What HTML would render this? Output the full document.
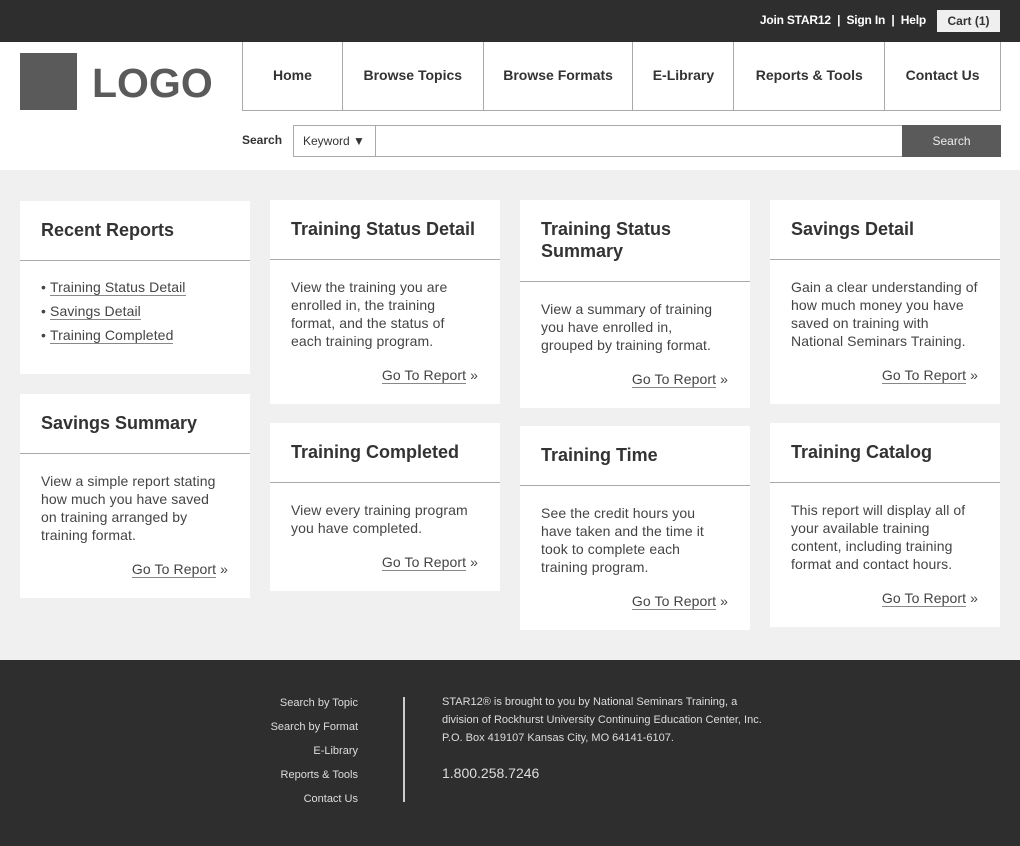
<!DOCTYPE html>
<html><head><meta charset="utf-8"><style>
*{margin:0;padding:0;box-sizing:border-box}
body{width:1020px;height:846px;position:relative;background:#f0f0f0;font-family:"Liberation Sans",Arial,sans-serif;overflow:hidden}
.top{position:absolute;left:0;top:0;width:1020px;height:42px;background:#2e2e2e}
.tl{position:absolute;top:13px;right:94px;color:#fff;font-size:12px;font-weight:bold;letter-spacing:-0.2px}
.cart{position:absolute;left:937px;top:10px;width:63px;height:22px;background:#efefef;color:#333;font-size:12px;font-weight:bold;text-align:center;line-height:22px}
.hdr{position:absolute;left:0;top:42px;width:1020px;height:128px;background:#fff}
.sq{position:absolute;left:20px;top:11px;width:57px;height:57px;background:#5a5a5a}
.logo{position:absolute;left:92px;top:17px;font-size:41px;font-weight:bold;color:#5a5a5a;line-height:48px}
.nav{position:absolute;left:242px;top:0;width:759px;height:69px;border:1px solid #aaa;border-top:none;display:flex}
.nav div{height:68px;line-height:66px;text-align:center;font-size:14px;font-weight:bold;color:#333;border-left:1px solid #aaa}
.nav div:first-child{border-left:none}
.sl{position:absolute;left:242px;top:91px;font-size:12px;font-weight:bold;color:#333}
.inp{position:absolute;left:293px;top:83px;width:708px;height:32px;border:1px solid #aaa;background:#fff}
.kw{position:absolute;left:0;top:0;width:82px;height:30px;border-right:1px solid #aaa;font-size:12px;color:#333;line-height:30px;padding-left:9px}
.btn{position:absolute;left:608px;top:-1px;width:99px;height:32px;background:#5a5a5a;color:#eee;font-size:12px;text-align:center;line-height:32px}
.card{position:absolute;width:230px;background:#fff}
.ch{padding:18px 21px 19px;font-size:18px;font-weight:bold;color:#333;line-height:22px;border-bottom:1px solid #aaa}
.cb{padding:18px 21px 20px;font-size:14px;line-height:18px;color:#444;white-space:nowrap;letter-spacing:0.1px}
.go{text-align:right;margin-top:16px;padding-right:1px}
.go span{border-bottom:1px solid #888;line-height:15px;display:inline-block}
ul{list-style:none}
li{line-height:24px;font-size:14px;color:#444}
li span{border-bottom:1px solid #888;line-height:15px;display:inline-block}
.ft{position:absolute;left:0;top:660px;width:1020px;height:186px;background:#2e2e2e;color:#ddd}
.fl{position:absolute;right:662px;top:31px;text-align:right;font-size:11px;line-height:24px}
.dv{position:absolute;left:403px;top:37px;width:2px;height:105px;background:#ccc}
.fx{position:absolute;left:442px;top:33px;font-size:11px;line-height:18px}
.ph{position:absolute;left:442px;top:105px;font-size:14px}
</style></head><body>
<div class="top"><div class="tl">Join STAR12 &nbsp;|&nbsp; Sign In &nbsp;|&nbsp; Help</div><div class="cart">Cart (1)</div></div>
<div class="hdr">
<div class="sq"></div><div class="logo">LOGO</div>
<div class="nav"><div style="width:99px">Home</div><div style="width:141px">Browse Topics</div><div style="width:150px">Browse Formats</div><div style="width:101px">E-Library</div><div style="width:151px">Reports &amp; Tools</div><div style="width:116px">Contact Us</div></div>
<div class="sl">Search</div>
<div class="inp"><div class="kw">Keyword ▼</div><div class="btn">Search</div></div>
</div>

<div class="card" style="left:20px;top:201px;height:173px"><div class="ch">Recent Reports</div><div class="cb" style="padding-top:14px"><ul><li>• <span>Training Status Detail</span></li><li>• <span>Savings Detail</span></li><li>• <span>Training Completed</span></li></ul></div></div>
<div class="card" style="left:20px;top:394px"><div class="ch">Savings Summary</div><div class="cb">View a simple report stating<br>how much you have saved<br>on training arranged by<br>training format.<div class="go"><span>Go To Report</span> »</div></div></div>

<div class="card" style="left:270px;top:200px"><div class="ch">Training Status Detail</div><div class="cb">View the training you are<br>enrolled in, the training<br>format, and the status of<br>each training program.<div class="go"><span>Go To Report</span> »</div></div></div>
<div class="card" style="left:270px;top:423px"><div class="ch">Training Completed</div><div class="cb">View every training program<br>you have completed.<div class="go"><span>Go To Report</span> »</div></div></div>

<div class="card" style="left:520px;top:200px"><div class="ch">Training Status<br>Summary</div><div class="cb">View a summary of training<br>you have enrolled in,<br>grouped by training format.<div class="go"><span>Go To Report</span> »</div></div></div>
<div class="card" style="left:520px;top:426px"><div class="ch">Training Time</div><div class="cb">See the credit hours you<br>have taken and the time it<br>took to complete each<br>training program.<div class="go"><span>Go To Report</span> »</div></div></div>

<div class="card" style="left:770px;top:200px"><div class="ch">Savings Detail</div><div class="cb">Gain a clear understanding of<br>how much money you have<br>saved on training with<br>National Seminars Training.<div class="go"><span>Go To Report</span> »</div></div></div>
<div class="card" style="left:770px;top:423px"><div class="ch">Training Catalog</div><div class="cb">This report will display all of<br>your available training<br>content, including training<br>format and contact hours.<div class="go"><span>Go To Report</span> »</div></div></div>

<div class="ft">
<div class="fl">Search by Topic<br>Search by Format<br>E-Library<br>Reports &amp; Tools<br>Contact Us</div>
<div class="dv"></div>
<div class="fx">STAR12® is brought to you by National Seminars Training, a<br>division of Rockhurst University Continuing Education Center, Inc.<br>P.O. Box 419107 Kansas City, MO 64141-6107.</div>
<div class="ph">1.800.258.7246</div>
</div>
</body></html>
